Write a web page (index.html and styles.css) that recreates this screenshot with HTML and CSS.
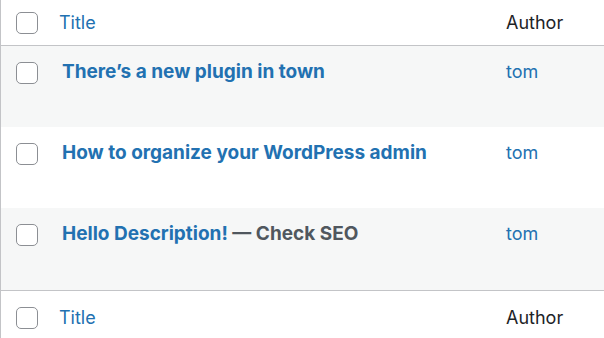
FILE: index.html
```html
<!DOCTYPE html>
<html lang="en">
<head>
    <meta charset="UTF-8">
    <title>Posts</title>
    <link rel="stylesheet" href="styles.css">
</head>
<body>
    <div class="list-table">
        <div class="row head">
            <span class="check"><span class="box"></span></span>
            <a class="col-title" href="#">Title</a>
            <span class="col-author">Author</span>
        </div>

        <div class="row post alt">
            <span class="check"><span class="box"></span></span>
            <a class="row-title" href="#">There’s a new plugin in town</a>
            <a class="author-link" href="#">tom</a>
        </div>
        <div class="row post">
            <span class="check"><span class="box"></span></span>
            <a class="row-title" href="#">How to organize your WordPress admin</a>
            <a class="author-link" href="#">tom</a>
        </div>
        <div class="row post alt last">
            <span class="check"><span class="box"></span></span>
            <span><a class="row-title" href="#">Hello Description!</a><span class="post-state"> — Check SEO</span></span>
            <a class="author-link" href="#">tom</a>
        </div>

        <div class="row foot">
            <span class="check"><span class="box"></span></span>
            <a class="col-title" href="#">Title</a>
            <span class="col-author">Author</span>
        </div>
    </div>
</body>
</html>
```

FILE: styles.css
```css
body {
    margin: 0;
    background: #fff;
    font-family: Inter, "Noto Sans", sans-serif;
    font-size: 18px;
    color: #2c3338;
}
.list-table {
    border-left: 1px solid #c3c4c7;
    height: 338px;
    overflow: hidden;
}
.row {
    display: grid;
    grid-template-columns: 58px 447px 1fr;
    align-items: start;
}
a {
    color: #2271b1;
    text-decoration: none;
}
.check {
    padding-left: 15px;
}
.box {
    display: block;
    width: 20px;
    height: 20px;
    border: 1px solid #8c8f94;
    border-radius: 5px;
    background: #fff;
}
/* header / footer */
.head {
    height: 46px;
    padding-top: 12px;
    box-sizing: border-box;
    border-bottom: 1px solid #c3c4c7;
}
.foot {
    height: 48px;
    padding-top: 16px;
    box-sizing: border-box;
    border-top: 1px solid #c3c4c7;
}
.col-title, .col-author {
    line-height: 22px;
}
.col-author {
    color: #1d2327;
}
/* post rows */
.post {
    height: 81px;
    padding-top: 16px;
    box-sizing: border-box;
}
.post.last {
    height: 82px;
}
.post.alt {
    background: #f6f7f7;
}
.post > :nth-child(2) {
    padding-left: 3px;
    line-height: 20px;
}
.row-title {
    font-weight: 700;
    font-size: 19px;
}
.post-state {
    font-weight: 700;
    font-size: 19px;
    color: #50575e;
}
.author-link {
    line-height: 20px;
}
```
